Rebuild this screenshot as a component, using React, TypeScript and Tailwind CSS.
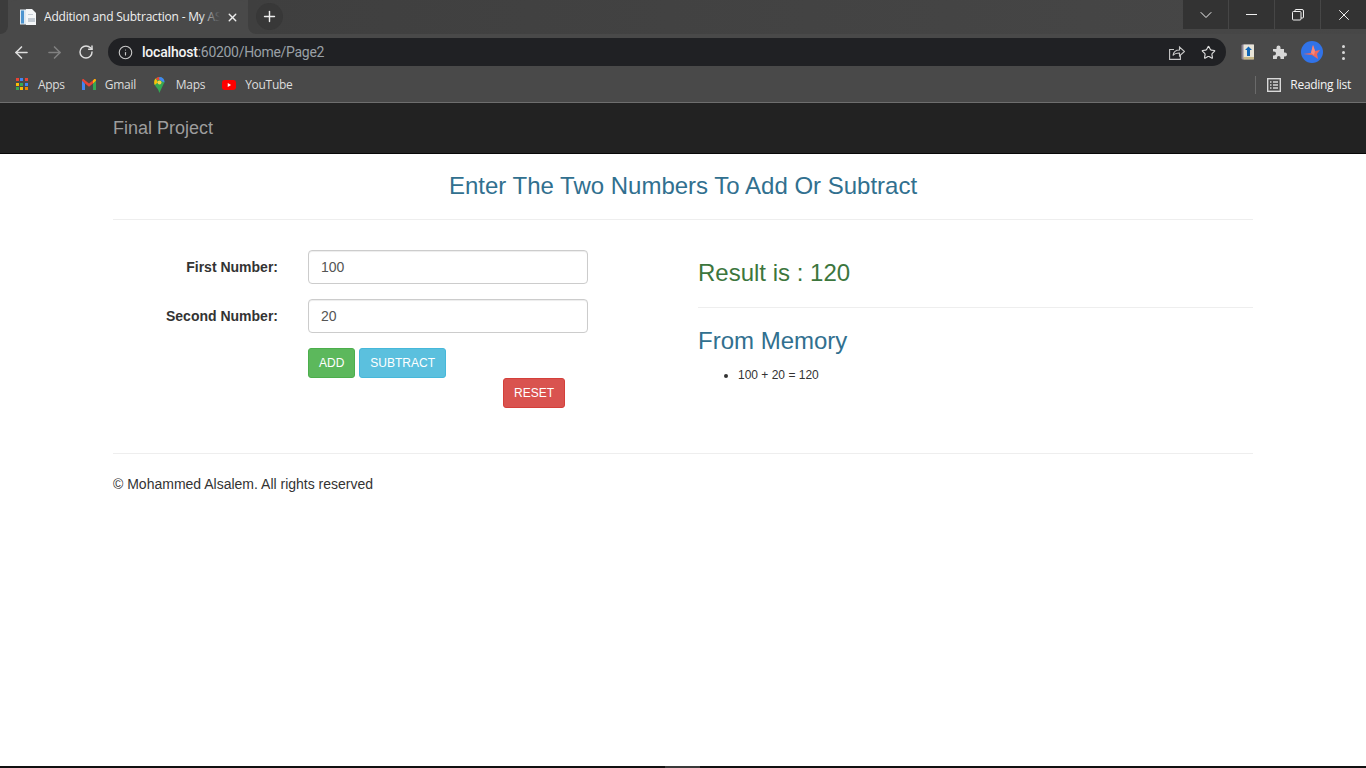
import { ArrowLeft, ArrowRight, ChevronDown, Info, Plus, RotateCw, Star, X } from "lucide-react";

const appColors = ["#ea4335", "#4285f4", "#ea4335", "#fbbc05", "#34a853", "#4285f4", "#34a853", "#fbbc05", "#ea8600"];

function AppsIcon() {
  return (
    <div className="grid grid-cols-3 gap-px w-[13px] h-[13px]">
      {appColors.map((c, i) => (
        <span key={i} className="w-[3px] h-[3px]" style={{ backgroundColor: c }} />
      ))}
    </div>
  );
}

function GmailIcon() {
  return (
    <svg width="14" height="11" viewBox="0 0 14 11">
      <path d="M0 1.5V11h3V4.5z" fill="#4285f4" />
      <path d="M14 1.5V11h-3V4.5z" fill="#34a853" />
      <path d="M0 1.5C0 .3 1.2-.3 2 .4L7 4.5 12 .4c.8-.7 2-.1 2 1.1L11 4.5 7 7.7 3 4.5z" fill="#ea4335" />
      <path d="M11 1.5l1-1.1c.8-.7 2-.1 2 1.1L11 4.5z" fill="#fbbc05" />
    </svg>
  );
}

function MapsIcon() {
  return (
    <svg width="11" height="16" viewBox="0 0 11 16">
      <path d="M5.5 0C2.5 0 0 2.4 0 5.4c0 1 .3 1.9.8 2.7C2 10.400 4.600 12 5.300 16l5-10.600C11 4.500 10 2.200 8.900 1.200 7.900.4 6.800 0 5.500 0z" fill="#34a853" />
      <path d="M.8 8.100L4 5.300 1.700 1.500C.4 2.600-.4 5.600.8 8.100z" fill="#fbbc05" />
      <path d="M5.500 0C4 0 2.700.6 1.700 1.500L4 3.500 6 2.200z" fill="#ea4335" />
      <path d="M5.500 0C6.800 0 7.900.4 8.900 1.200c.9.900 1.600 2.400 1.500 4.200L7.300 4 5 2z" fill="#4285f4" />
      <circle cx="5.500" cy="5.400" r="2" fill="#f4d24a" />
    </svg>
  );
}

function YoutubeIcon() {
  return (
    <svg width="17" height="12" viewBox="0 0 17 12">
      <rect width="17" height="12" rx="3" fill="#f00" />
      <path d="M7 3.500v5L11 6z" fill="#fff" />
    </svg>
  );
}

function PageIcon() {
  return (
    <svg width="16" height="16" viewBox="0 0 16 16">
      <rect x="0" y="0.500" width="6" height="15" fill="#dfe8f0" />
      <rect x="1" y="1.500" width="3" height="13" fill="#4d94cf" />
      <path d="M6 0h6l4 4v12H6z" fill="#f4f6f8" />
      <rect x="8" y="9" width="7" height="4" fill="#c4ccd4" />
      <rect x="8" y="5" width="5" height="1" fill="#c4ccd4" />
    </svg>
  );
}

function ExtensionIcon() {
  return (
    <svg width="14" height="16" viewBox="0 0 14 16">
      <rect x="0.500" y="0.500" width="12" height="15" rx="1" fill="#8d8494" />
      <rect x="2.500" y="0.500" width="10.500" height="13" fill="#e8e4d8" />
      <rect x="2.500" y="13" width="10.500" height="2.500" fill="#c9b98a" />
      <path d="M7.500 2.500L11 6H9v6H6V6H4z" fill="#1167b8" />
    </svg>
  );
}

function AvatarIcon() {
  return (
    <div className="w-[22px] h-[22px] rounded-full bg-[#3173e8] flex items-center justify-center">
      <svg width="18" height="16" viewBox="0 0 18 16">
        <path d="M0 10l8-1 2-8 2 6 5-1-3 4 1 5-6-4z" fill="#f0685c" />
        <path d="M8 9l2-8 2 6-1 4z" fill="#f58a7e" />
      </svg>
    </div>
  );
}

function ReadingListIcon() {
  return (
    <svg width="14" height="14" viewBox="0 0 14 14" fill="none" stroke="#d8d8d8" strokeWidth="1.400">
      <rect x="0.700" y="0.700" width="12.600" height="12.600" />
      <path d="M3 4h1.500M6 4h5M3 7h1.500M6 7h5M3 10h1.500M6 10h5" />
    </svg>
  );
}

function RestoreIcon() {
  return (
    <svg width="12" height="12" viewBox="0 0 12 12" fill="none" stroke="#f0f0f0" strokeWidth="1">
      <rect x="0.500" y="2.500" width="8.500" height="8.500" rx="1" />
      <path d="M3 2.500V1.500a1 1 0 0 1 1-1h6a1.500 1.500 0 0 1 1.500 1.500v6a1 1 0 0 1-1 1H9" />
    </svg>
  );
}

function ShareIcon() {
  return (
    <svg width="16" height="15" viewBox="0 0 16 15" fill="none" stroke="#c8c8c8" strokeWidth="1.100">
      <path d="M5 4.500H.6v9.900h10.800V10" />
      <path d="M4 10.500c.5-3.500 3-5.500 6.500-5.500V2l5 4.500-5 4.500V8C8 8 5.500 8.500 4 10.500z" />
    </svg>
  );
}

function PuzzleIcon() {
  return (
    <svg width="16" height="16" viewBox="0 0 16 16">
      <path d="M1 5h3.500V3.500a2 2 0 0 1 4 0V5H12v3.500h1a2 2 0 0 1 0 4h-1V15H8.500v-1.200a1.800 1.800 0 0 0-3.600 0V15H1v-3.500h1a2 2 0 0 0 0-4H1z" fill="#d8d8d8" />
    </svg>
  );
}

function ThreeDots() {
  return (
    <div className="flex flex-col gap-[3px]">
      <span className="w-[3px] h-[3px] rounded-full bg-[#d8d8d8]" />
      <span className="w-[3px] h-[3px] rounded-full bg-[#d8d8d8]" />
      <span className="w-[3px] h-[3px] rounded-full bg-[#d8d8d8]" />
    </div>
  );
}

function Bookmark({ icon, label }: { icon: React.ReactNode; label: string }) {
  return (
    <div className="flex items-center gap-[9px]">
      <div className="w-[14px] flex justify-center">{icon}</div>
      <span className="text-[12px] tracking-[-0.3px] text-[#dddddd]">{label}</span>
    </div>
  );
}

function BrowserChrome() {
  return (
    <div className="font-['Open_Sans',sans-serif] bg-[#494949]">
      <div className="h-[34px] flex">
        <div className="w-2 rounded-br-lg bg-[#3c3c3c]" />
        <div className="w-[240px] h-[34px] rounded-t-[9px] bg-[#494949] flex items-center pl-[12px] pr-[9px]">
          <PageIcon />
          <div className="relative ml-2 w-[176px] h-[18px] overflow-hidden whitespace-nowrap text-[12px] tracking-[-0.2px] text-[#f0f0f0]">
            Addition and Subtraction - My ASP.NET Application
            <div className="absolute right-0 top-0 bottom-0 w-5 bg-gradient-to-r from-transparent to-[#494949]" />
          </div>
          <X size={13} strokeWidth={2.500} className="ml-auto text-[#eeeeee]" />
        </div>
        <div className="flex-1 flex rounded-bl-lg bg-gradient-to-r from-[#3f3f3f] to-[#474747]">
          <div className="ml-2 mt-[3px] w-[27px] h-[27px] rounded-full bg-[#383838] flex items-center justify-center">
            <Plus size={17} strokeWidth={2} className="text-[#eeeeee]" />
          </div>
          <div className="ml-auto h-[29px] flex gap-px">
            <div className="w-[45px] bg-[#333333] flex items-center justify-center">
              <ChevronDown size={20} strokeWidth={1} absoluteStrokeWidth className="text-[#f0f0f0]" />
            </div>
            <div className="w-[45px] bg-[#333333] flex items-center justify-center">
              <div className="w-[11px] h-px bg-[#f0f0f0]" />
            </div>
            <div className="w-[45px] bg-[#333333] flex items-center justify-center">
              <RestoreIcon />
            </div>
            <div className="w-[45px] bg-[#333333] flex items-center justify-center">
              <X size={18} strokeWidth={1} absoluteStrokeWidth className="text-[#f0f0f0]" />
            </div>
          </div>
        </div>
      </div>

      <div className="h-[36px] flex items-center pl-[12px] pr-[13px]">
        <ArrowLeft size={19} strokeWidth={2} className="text-[#dedede]" />
        <ArrowRight size={19} strokeWidth={2} className="ml-[14px] text-[#808080]" />
        <RotateCw size={16} strokeWidth={2.200} className="ml-[14px] text-[#dedede]" />
        <div className="ml-[14px] w-[1118px] h-7 rounded-full bg-[#202124] flex items-center pl-[10px] pr-[10px]">
          <Info size={15} strokeWidth={1.800} className="text-[#c8c8c8]" />
          <span className="ml-[9px] text-[14px] tracking-[-0.2px] font-['Roboto',sans-serif] font-medium text-[#f4f4f4]">localhost</span>
          <span className="text-[14px] tracking-[-0.3px] font-['Roboto',sans-serif] text-[#9aa0a6]">:60200/Home/Page2</span>
          <div className="ml-auto"><ShareIcon /></div>
          <Star size={15} strokeWidth={1.800} className="ml-[16px] text-[#dedede]" />
        </div>
        <div className="ml-[15px]"><ExtensionIcon /></div>
        <div className="ml-[17px]"><PuzzleIcon /></div>
        <div className="ml-[13px]"><AvatarIcon /></div>
        <div className="ml-[19px]"><ThreeDots /></div>
      </div>

      <div className="h-[32px] flex items-center pb-[3px] pl-[15px] pr-[15px] gap-[17px]">
        <Bookmark icon={<AppsIcon />} label="Apps" />
        <Bookmark icon={<GmailIcon />} label="Gmail" />
        <Bookmark icon={<MapsIcon />} label="Maps" />
        <Bookmark icon={<YoutubeIcon />} label="YouTube" />
        <div className="ml-auto h-[18px] border-l border-[#6a6a6a] pl-[11px] flex items-center gap-[9px]">
          <ReadingListIcon />
          <span className="text-[12px] tracking-[-0.3px] text-[#f4f4f4]">Reading list</span>
        </div>
      </div>
      <div className="h-px bg-[#6e6e6e]" />
    </div>
  );
}

function FormRow({ label, value }: { label: string; value: string }) {
  return (
    <div className="flex items-center mb-[15px]">
      <label className="w-[165px] text-right text-[14px] font-bold text-[#333333]">{label}</label>
      <input
        readOnly
        value={value}
        className="ml-[30px] w-[280px] h-[34px] px-3 text-[14px] text-[#555555] bg-white border border-[#cccccc] rounded shadow-[inset_0_1px_1px_rgba(0,0,0,0.075)]"
      />
    </div>
  );
}

export default function App() {
  return (
    <div className="h-screen flex flex-col overflow-hidden bg-white font-['Liberation_Sans',Arial,sans-serif] text-[14px] text-[#333333]">
      <BrowserChrome />

      <nav className="h-[51px] shrink-0 bg-[#222222] border-b border-[#080808] flex items-center">
        <div className="w-[1170px] mx-auto px-[15px]">
          <span className="text-[18px] text-[#9d9d9d]">Final Project</span>
        </div>
      </nav>

      <main className="flex-1 w-[1170px] mx-auto px-[15px]">
        <h2 className="mt-[19px] text-center text-[24px] leading-[26px] text-[#31708f]">
          Enter The Two Numbers To Add Or Subtract
        </h2>
        <hr className="mt-5 border-[#eeeeee]" />

        <div className="mt-[30px] flex h-[203px]">
          <div className="w-[585px]">
            <FormRow label="First Number:" value="100" />
            <FormRow label="Second Number:" value="20" />
            <div className="ml-[195px] flex gap-1">
              <button className="h-[30px] px-[10px] text-[12px] font-medium text-white bg-[#5cb85c] border border-[#4cae4c] rounded-[3px]">ADD</button>
              <button className="h-[30px] px-[10px] text-[12px] font-medium text-white bg-[#5bc0de] border border-[#46b8da] rounded-[3px]">SUBTRACT</button>
            </div>
            <div className="ml-[390px]">
              <button className="h-[30px] px-[10px] text-[12px] font-medium text-white bg-[#d9534f] border border-[#d43f3a] rounded-[3px]">RESET</button>
            </div>
          </div>

          <div className="flex-1">
            <h3 className="mt-[10px] text-[24px] leading-[26px] text-[#3c763d]">Result is : 120</h3>
            <hr className="mt-[21px] border-[#eeeeee]" />
            <h3 className="mt-5 text-[24px] leading-[26px] text-[#31708f]">From Memory</h3>
            <ul className="mt-[13px] pl-[41px] list-disc text-[12px] leading-[17px] text-[#333333]">
              <li className="-ml-px">100 + 20 = 120</li>
            </ul>
          </div>
        </div>

        <hr className="border-[#eeeeee]" />
        <p className="mt-5 text-[14px] leading-5 text-[#333333]">© Mohammed Alsalem. All rights reserved</p>
      </main>

      <div className="h-[2px] shrink-0 bg-[#111111] flex">
        <div className="ml-[665px] w-[35px] bg-[#3a3a3a]" />
      </div>
    </div>
  );
}
